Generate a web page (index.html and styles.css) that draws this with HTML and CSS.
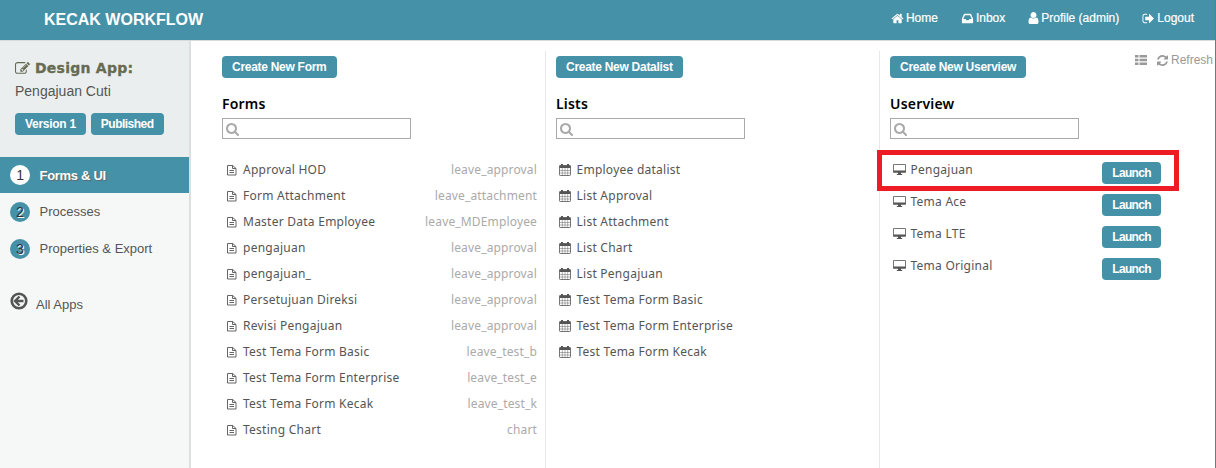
FILE: index.html
```html
<!DOCTYPE html>
<html lang="en">
<head>
<meta charset="utf-8">
<title>Kecak Workflow</title>
<link rel="stylesheet" href="styles.css">
</head>
<body>
<svg class="sprite" aria-hidden="true">
  <symbol id="home" viewBox="0 0 1792 1792"><path d="M1472 992v480q0 26-19 45t-45 19h-384v-384h-256v384h-384q-26 0-45-19t-19-45v-480q0-1 .5-3t.5-3l575-474 575 474q1 2 1 6zm223-69l-62 74q-8 9-21 11h-3q-13 0-21-7l-692-577-692 577q-12 8-24 7-13-2-21-11l-62-74q-8-10-7-23.500t11-21.500l719-599q32-26 76-26t76 26l244 204v-195q0-14 9-23t23-9h192q14 0 23 9t9 23v408l219 182q10 8 11 21.500t-7 23.500z"/></symbol>
  <symbol id="inbox" viewBox="0 0 1792 1792"><path d="M1151 960h316q-1-3-2.500-8.500t-2.500-7.500l-212-496h-708l-212 496q-1 3-2.500 8.500t-2.500 7.500h316l95 192h320zm513 30v482q0 26-19 45t-45 19h-1408q-26 0-45-19t-19-45v-482q0-62 25-123l238-552q10-25 36.500-42t52.500-17h832q26 0 52.500 17t36.500 42l238 552q25 61 25 123z"/></symbol>
  <symbol id="user" viewBox="192 0 1408 1792"><path d="M1536 1399q0 109-62.500 187t-150.500 78h-854q-88 0-150.500-78t-62.500-187q0-85 8.500-160.500t31.500-152 58.500-131 94-89 134.500-34.500q131 128 313 128t313-128q76 0 134.500 34.500t94 89 58.500 131 31.500 152 8.500 160.500zm-256-887q0 159-112.500 271.500t-271.500 112.500-271.500-112.500-112.500-271.500 112.500-271.500 271.500-112.500 271.500 112.500 112.500 271.500z"/></symbol>
  <symbol id="logout" viewBox="0 0 1792 1792"><path d="M704 1440q0 4 1 20t.5 26.500-3 23.500-10 19.500-20.500 6.500h-320q-119 0-203.500-84.500t-84.500-203.500v-704q0-119 84.500-203.500t203.500-84.500h320q13 0 22.500 9.500t9.500 22.500q0 4 1 20t.5 26.500-3 23.500-10 19.500-20.500 6.500h-320q-66 0-113 47t-47 113v704q0 66 47 113t113 47h312l11.500 1 11.500 3 8 5.500 7 9 2 13.500zm928-544q0 26-19 45l-544 544q-19 19-45 19t-45-19-19-45v-288h-448q-26 0-45-19t-19-45v-384q0-26 19-45t45-19h448v-288q0-26 19-45t45-19 45 19l544 544q19 19 19 45z"/></symbol>
  <symbol id="search" viewBox="64 128 1664 1664"><path d="M1216 832q0-185-131.500-316.500t-316.500-131.500-316.500 131.500-131.500 316.500 131.500 316.500 316.500 131.500 316.500-131.500 131.500-316.500zm512 832q0 52-38 90t-90 38q-54 0-90-38l-343-342q-179 124-399 124-143 0-273.500-55.500t-225-150-150-225-55.500-273.500 55.500-273.500 150-225 225-150 273.500-55.500 273.500 55.500 225 150 150 225 55.500 273.500q0 220-124 399l343 343q37 37 37 90z"/></symbol>
  <symbol id="edit" viewBox="0 0 1792 1792"><path d="M888 1184l116-116-152-152-116 116v56h96v96h56zm440-720q-16-16-33 1l-350 350q-17 17-1 33t33-1l350-350q17-17 1-33zm80 594v190q0 119-84.500 203.500t-203.500 84.500h-832q-119 0-203.500-84.500t-84.500-203.500v-832q0-119 84.500-203.500t203.500-84.500h832q63 0 117 25 15 7 18 23 3 17-9 29l-49 49q-14 14-32 8-23-6-45-6h-832q-66 0-113 47t-47 113v832q0 66 47 113t113 47h832q66 0 113-47t47-113v-126q0-13 9-22l64-64q15-15 35-7t20 29zm-96-738l288 288-672 672h-288v-288zm444 132l-92 92-288-288 92-92q28-28 68-28t68 28l152 152q28 28 28 68t-28 68z"/></symbol>
  <symbol id="refresh" viewBox="128 128 1536 1536"><path d="M1639 1056q0 5-1 7-64 268-268 434.500t-478 166.500q-146 0-282.500-55t-243.500-157l-129 129q-19 19-45 19t-45-19-19-45v-448q0-26 19-45t45-19h448q26 0 45 19t19 45-19 45l-137 137q71 66 161 102t187 36q134 0 250-65t186-179q11-17 53-117 8-23 30-23h192q13 0 22.500 9.500t9.500 22.500zm25-800v448q0 26-19 45t-45 19h-448q-26 0-45-19t-19-45 19-45l138-138q-148-137-349-137-134 0-250 65t-186 179q-11 17-53 117-8 23-30 23h-199q-13 0-22.500-9.500t-9.500-22.500v-7q65-268 270-434.500t480-166.500q146 0 284 55.500t245 156.500l130-129q19-19 45-19t45 19 19 45z"/></symbol>
  <symbol id="list" viewBox="0 0 12 10"><path d="M0 0h3.500v2.500H0zM4.500 0H12v2.500H4.500zM0 3.700h3.500v2.500H0zM4.500 3.700H12v2.500H4.500zM0 7.400h3.500v2.500H0zM4.500 7.400H12v2.500H4.500z"/></symbol>
  <symbol id="file" viewBox="0 0 10 12"><path d="M.5 1.500h5.200L9 4.500V11H.5zM5.500 1.500v3H9M2.500 6.500H7M2.500 8.500H7" fill="none" stroke="currentColor" stroke-width=".9"/></symbol>
  <symbol id="calendar" viewBox="0 0 12 12"><path d="M1.200 1.500h9.600q.7 0 .7.700v8.600q0 .7-.7.700H1.200q-.7 0-.7-.7V2.200q0-.7.700-.7z" fill="none" stroke="currentColor" stroke-width=".8"/><path d="M.5 1.500h11v2.500H.5zM2 0h2v2.500H2zM8 0h2v2.500H8z"/><path d="M3.300 4v7.500M6 4v7.500M8.700 4v7.500M.5 6.500h11M.5 9h11" fill="none" stroke="currentColor" stroke-width=".45"/></symbol>
  <symbol id="desktop" viewBox="0 0 13 11"><path d="M.5.5h12v7H.5z" fill="none" stroke="currentColor" stroke-width=".8"/><path d="M.2 6.500h12.600v2.200H.2zM5 8h3v2h1.200v1H3.800v-1H5z"/></symbol>
  <symbol id="back" viewBox="0 0 18 18"><circle cx="9" cy="9" r="7.300" fill="none" stroke="currentColor" stroke-width="2.600"/><path d="M13.500 9H5M9.500 4.500L5 9l4.500 4.500" fill="none" stroke="currentColor" stroke-width="2.400"/></symbol>
</svg>
<div class="page">
  <header class="topbar">
    <div class="brand">KECAK WORKFLOW</div>
    <nav class="topnav">
      <a><svg><use href="#home"/></svg>Home</a>
      <a><svg><use href="#inbox"/></svg>Inbox</a>
      <a><svg class="narrow"><use href="#user"/></svg>Profile (admin)</a>
      <a><svg><use href="#logout"/></svg>Logout</a>
    </nav>
  </header>
  <div class="body">
    <aside class="sidebar">
      <div class="app">
        <h1><svg><use href="#edit"/></svg>Design App:</h1>
        <p>Pengajuan Cuti</p>
        <div class="tags"><span class="btn">Version 1</span><span class="btn tight">Published</span></div>
      </div>
      <nav class="steps">
        <a class="active"><b>1</b><span>Forms &amp; UI</span></a>
        <a><b>2</b><span>Processes</span></a>
        <a><b>3</b><span>Properties &amp; Export</span></a>
      </nav>
      <a class="all"><svg><use href="#back"/></svg><span>All Apps</span></a>
    </aside>
    <main class="main">
      <section class="col">
        <span class="btn">Create New Form</span>
        <h2>Forms</h2>
        <div class="search"><svg><use href="#search"/></svg></div>
        <ul class="rows">
          <li><svg class="file"><use href="#file"/></svg><span>Approval HOD</span><i>leave_approval</i></li>
          <li><svg class="file"><use href="#file"/></svg><span>Form Attachment</span><i>leave_attachment</i></li>
          <li><svg class="file"><use href="#file"/></svg><span>Master Data Employee</span><i>leave_MDEmployee</i></li>
          <li><svg class="file"><use href="#file"/></svg><span>pengajuan</span><i>leave_approval</i></li>
          <li><svg class="file"><use href="#file"/></svg><span>pengajuan_</span><i>leave_approval</i></li>
          <li><svg class="file"><use href="#file"/></svg><span>Persetujuan Direksi</span><i>leave_approval</i></li>
          <li><svg class="file"><use href="#file"/></svg><span>Revisi Pengajuan</span><i>leave_approval</i></li>
          <li><svg class="file"><use href="#file"/></svg><span>Test Tema Form Basic</span><i>leave_test_b</i></li>
          <li><svg class="file"><use href="#file"/></svg><span>Test Tema Form Enterprise</span><i>leave_test_e</i></li>
          <li><svg class="file"><use href="#file"/></svg><span>Test Tema Form Kecak</span><i>leave_test_k</i></li>
          <li><svg class="file"><use href="#file"/></svg><span>Testing Chart</span><i>chart</i></li>
        </ul>
      </section>
      <section class="col ruled">
        <span class="btn">Create New Datalist</span>
        <h2>Lists</h2>
        <div class="search"><svg><use href="#search"/></svg></div>
        <ul class="rows">
          <li><svg class="cal"><use href="#calendar"/></svg><span>Employee datalist</span></li>
          <li><svg class="cal"><use href="#calendar"/></svg><span>List Approval</span></li>
          <li><svg class="cal"><use href="#calendar"/></svg><span>List Attachment</span></li>
          <li><svg class="cal"><use href="#calendar"/></svg><span>List Chart</span></li>
          <li><svg class="cal"><use href="#calendar"/></svg><span>List Pengajuan</span></li>
          <li><svg class="cal"><use href="#calendar"/></svg><span>Test Tema Form Basic</span></li>
          <li><svg class="cal"><use href="#calendar"/></svg><span>Test Tema Form Enterprise</span></li>
          <li><svg class="cal"><use href="#calendar"/></svg><span>Test Tema Form Kecak</span></li>
        </ul>
      </section>
      <section class="col ruled last">
        <div class="head"><span class="btn">Create New Userview</span>
          <div class="tools"><svg class="list"><use href="#list"/></svg><svg class="refresh"><use href="#refresh"/></svg><span>Refresh</span></div>
        </div>
        <h2>Userview</h2>
        <div class="search"><svg><use href="#search"/></svg></div>
        <ul class="views">
          <li class="marked"><svg><use href="#desktop"/></svg><span>Pengajuan</span><b class="btn">Launch</b></li>
          <li><svg><use href="#desktop"/></svg><span>Tema Ace</span><b class="btn">Launch</b></li>
          <li><svg><use href="#desktop"/></svg><span>Tema LTE</span><b class="btn">Launch</b></li>
          <li><svg><use href="#desktop"/></svg><span>Tema Original</span><b class="btn">Launch</b></li>
        </ul>
      </section>
    </main>
  </div>
</div>
</body>
</html>
```
FILE: styles.css
```css
*, *::after { box-sizing: border-box; }
body, h1, h2, p, ul { margin: 0; padding: 0; }
body { font: 12px "Liberation Sans", Arial, sans-serif; color: #555; background: #fff; overflow: hidden; }
svg { fill: currentColor; flex: none; }
.sprite { display: none; }
.page { width: 1216px; height: 468px; border-right: 1px solid #777; display: flex; flex-direction: column; }
.topbar { height: 41px; background: #4591a8; border-bottom: 1px solid #d8dbdc; display: flex; justify-content: space-between; padding: 0 21px 0 44px; color: #fff; }
.brand { font-size: 16px; font-weight: bold; line-height: 39px; }
.topnav { display: flex; gap: 23px; line-height: 36px; }
.topnav a { display: flex; align-items: center; gap: 2px; height: 36px; -webkit-text-stroke: .2px; }
.topnav svg { width: 13px; height: 13px; }
.topnav svg.narrow { width: 11px; height: 14px; }
.body { flex: 1; display: flex; min-height: 0; }
.sidebar { width: 191px; background: #f6f8f8; border-right: 2px solid #dcdfdf; }
.app { height: 116px; background: #ebeeef; padding: 17px 15px 0; }
.app h1 { display: flex; align-items: center; gap: 5px; height: 20px; font: bold 14px "DejaVu Sans", Verdana, sans-serif; letter-spacing: .25px; color: #666b51; -webkit-text-stroke: .3px; }
.app h1 svg { width: 15px; height: 15px; }
.app p { font-size: 14px; line-height: 16px; margin-top: 5px; }
.tags { display: flex; gap: 5px; margin-top: 14px; }
.btn { display: inline-block; height: 22px; padding: 0 10px; border-radius: 4px; background: #4591a8; color: #fff; font: bold 12px/22px "Liberation Sans", Arial, sans-serif; letter-spacing: -.28px; white-space: nowrap; }
.btn.tight { letter-spacing: -.52px; }
.steps a { display: flex; align-items: center; height: 37px; padding-left: 10px; font-size: 13px; }
.steps b { width: 20px; height: 20px; border-radius: 50%; background: #4591a8; color: #333; text-align: center; font: 14px/20px "Liberation Sans", Arial, sans-serif; text-shadow: 1px 1px 0 #fff; margin-right: 9.500px; }
.steps .active { height: 36px; background: #4591a8; color: #fff; font-weight: bold; text-shadow: 1px 1px 1px #666; letter-spacing: -.3px; }
.steps .active b { background: #fff; text-shadow: none; }
.all { display: flex; align-items: center; padding: 0 0 0 10px; margin-top: 26px; height: 20px; font-size: 13px; gap: 8px; }
.all svg { width: 18px; height: 18px; margin-top: -4px; }
.all span { margin-top: 3px; }
.main { flex: 1; display: flex; padding-top: 10px; }
.col { width: 334px; padding: 5px 8px 0 10px; border-left: 1px solid transparent; font-family: "Noto Sans", "Open Sans", sans-serif; }
.col:first-child { margin-left: 20px; }
.ruled { border-left-color: #e8e8e8; }
.last { flex: 1; padding-right: 2px; }
.head { display: flex; justify-content: space-between; height: 22px; }
.tools { display: flex; align-items: center; height: 8px; color: #999; font: 12px "Liberation Sans", Arial, sans-serif; }
.tools .list { width: 12px; height: 10px; margin-right: 10px; }
.tools .refresh { width: 11px; height: 11px; margin-right: 3px; }
.col h2 { font-size: 14px; line-height: 20px; font-weight: 600; color: #000; margin-top: 16px; letter-spacing: .2px; }
.col > .btn { display: block; width: max-content; }
.search { width: 189px; height: 21px; border: 1px solid #a9a9a9; margin-top: 4px; padding: 4px 3px; color: #a9a9a9; }
.search svg { display: block; width: 13px; height: 13px; }
.rows, .views { list-style: none; font-size: 12px; letter-spacing: .25px; }
.rows { padding-top: 17px; }
.rows li { display: flex; align-items: center; height: 26px; }
.rows i { font-style: normal; color: #aaa; margin-left: auto; letter-spacing: .15px; }
.file { width: 10px; height: 12px; margin: 1px 6px 0 5px; }
.cal { width: 12px; height: 12px; margin: 1px 5.500px 0 3px; }
.views { padding-top: 18px; width: 271px; }
.views li { position: relative; display: flex; height: 32px; padding-top: 5px; }
.views svg { width: 13px; height: 11px; margin: 2px 4.500px 0 3px; }
.views span { line-height: 16px; }
.views .btn { margin-left: auto; letter-spacing: -.65px; }
.marked::after { content: ""; position: absolute; left: -13px; top: -7px; width: 302px; height: 41px; border: 5px solid #ed1c24; z-index: 2; }
```
